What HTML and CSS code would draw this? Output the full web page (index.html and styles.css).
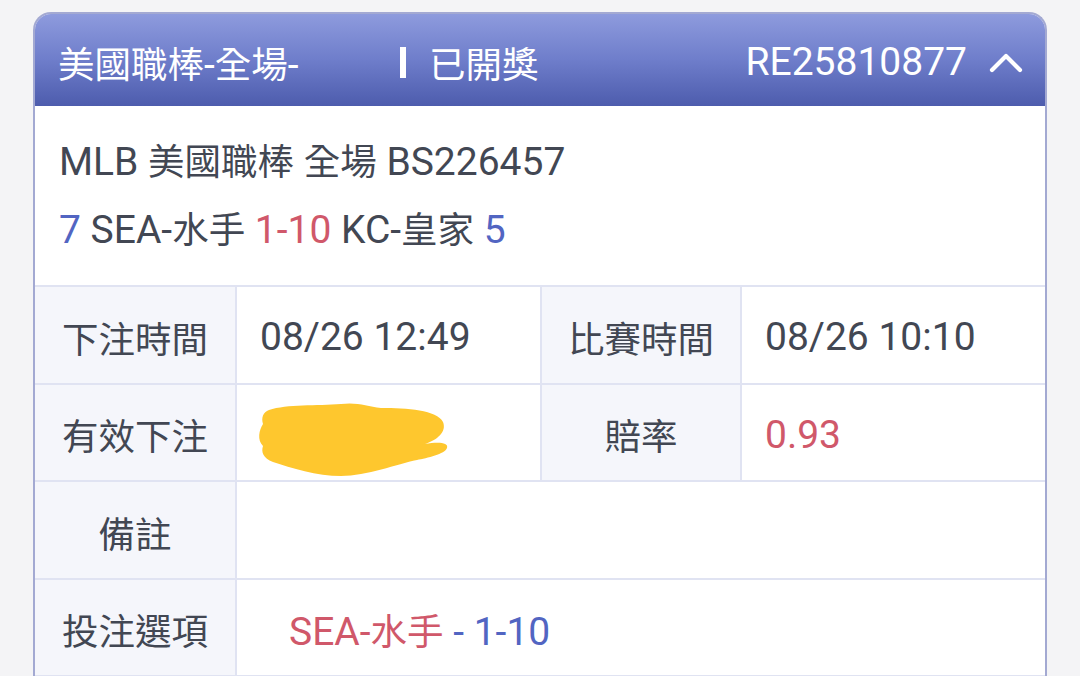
FILE: index.html
```html
<!DOCTYPE html>
<html lang="zh-Hant">
<head>
<meta charset="utf-8">
<link rel="stylesheet" href="styles.css">
</head>
<body>
<div class="page">
  <div class="card">
    <div class="card-head">
      <span class="head-title"><span class="c">美國職棒</span>-<span class="c">全場</span>-</span>
      <span class="head-status"><span class="bar"></span><span class="c">已開獎</span></span>
      <span class="head-id">RE25810877</span>
      <svg class="chev" width="34" height="22" viewBox="0 0 34 22"><polyline points="3,19 17,5 31,19" fill="none" stroke="#fff" stroke-width="4.2" stroke-linecap="round" stroke-linejoin="round"/></svg>
    </div>
    <div class="summary">
      <div class="line">MLB <span class="c">美國職棒</span> <span class="c">全場</span> BS226457</div>
      <div class="line"><span class="blue">7</span> SEA-<span class="c">水手</span> <span class="red">1-10</span> KC-<span class="c">皇家</span> <span class="blue">5</span></div>
    </div>
    <div class="grid">
      <div class="cell label">下注時間</div>
      <div class="cell value">08/26 12:49</div>
      <div class="cell label">比賽時間</div>
      <div class="cell value">08/26 10:10</div>

      <div class="cell label">有效下注</div>
      <div class="cell value"><svg class="scribble" width="194" height="80" viewBox="0 0 194 80"><path d="M12 10 C30 4 60 6 84 4 C100 2 110 6 124 8 C150 8 180 10 186 22 C190 32 180 40 168 44 C180 42 192 42 190 48 C188 54 170 58 160 60 C140 64 110 76 84 76 C60 76 34 68 16 62 C6 58 4 52 6 46 C0 40 2 30 6 24 C4 18 6 12 12 10 Z" fill="#fec72e"/></svg></div>
      <div class="cell label">賠率</div>
      <div class="cell value red">0.93</div>

      <div class="cell label">備註</div>
      <div class="cell value span3"></div>

      <div class="cell label">投注選項</div>
      <div class="cell value span3 pick"><span><span class="red">SEA-<span class="c">水手</span></span> <span class="blue">- 1-10</span></span></div>
    </div>
  </div>
</div>
</body>
</html>
```
FILE: styles.css
```css
* { box-sizing: border-box; }
html, body { margin: 0; padding: 0; }
body {
  width: 1080px;
  height: 676px;
  overflow: hidden;
  background: #f4f4f6;
  font-family: Roboto, "Noto Sans CJK TC", sans-serif;
  color: #424753;
}
.c { font-size: 36.5px; }
.page {
  padding: 12px 33px 0 33px;
}
.card {
  background: #fff;
  border: 2px solid #a3a9d2;
  border-bottom: none;
  border-radius: 18px 18px 0 0;
  overflow: hidden;
}
.card-head {
  height: 94px;
  margin: -2px -2px 0 -2px;
  background: linear-gradient(180deg, #8f9cde 0%, #6f7ecb 50%, #4d5cad 100%);
  display: flex;
  align-items: center;
  padding: 6px 24px 0 25px;
  color: #fff;
  font-size: 39px;
  border-radius: 18px 18px 0 0;
}
.head-title { width: 342px; }
.head-status { display: flex; align-items: center; }
.bar {
  display: inline-block;
  width: 6px;
  height: 31px;
  background: #fff;
  margin-right: 23px;
}
.head-id { margin-left: auto; margin-right: 22px; }
.chev { display: block; }
.summary {
  height: 181px;
  padding: 22px 0 0 24px;
  border-bottom: 2px solid #e0e3f2;
}
.line {
  font-size: 39px;
  line-height: 68px;
  height: 68px;
}
.blue { color: #5265c2; }
.red { color: #d0586a; }
.grid {
  display: grid;
  grid-template-columns: 202px 305px 200px 1fr;
  grid-auto-rows: 97.5px;
}
.cell {
  display: flex;
  align-items: center;
  font-size: 39px;
  padding-top: 5px;
  border-bottom: 2px solid #e0e3f2;
  border-right: 2px solid #e0e3f2;
}
.cell:nth-child(4n) { border-right: none; }
.label {
  background: #f5f6fb;
  justify-content: center;
  font-size: 36.5px;
}
.value { padding-left: 23px; }
.span3 { grid-column: 2 / 5; border-right: none; }
.pick { padding-left: 52px; }
.scribble { display: block; margin-left: -3px; margin-top: 10px; }
```
